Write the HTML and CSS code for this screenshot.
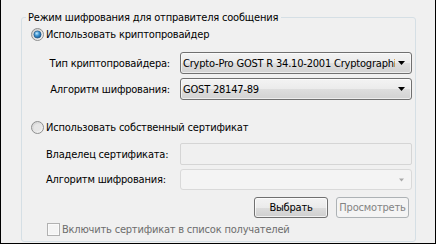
FILE: index.html
```html
<!DOCTYPE html>
<html lang="ru">
<head>
<meta charset="utf-8">
<title>Режим шифрования</title>
<link rel="stylesheet" href="styles.css">
</head>
<body>
<div class="frame">
  <fieldset class="group">
    <legend class="group-title">Режим шифрования для отправителя сообщения</legend>
    <div class="group-body">
      <div class="radio-row">
        <svg class="radio" width="13" height="13" viewBox="0 0 13 13">
          <defs>
            <linearGradient id="rb1" x1="0" y1="0" x2="1" y2="1"><stop offset="0" stop-color="#c9c9c9"/><stop offset="1" stop-color="#f7f7f7"/></linearGradient>
            <radialGradient id="dot" cx="0.4" cy="0.35" r="0.75"><stop offset="0" stop-color="#c4ebff"/><stop offset="0.45" stop-color="#3b93d2"/><stop offset="1" stop-color="#134b80"/></radialGradient>
          </defs>
          <circle cx="6.5" cy="6.5" r="6" fill="url(#rb1)" stroke="#8e8f8f"/>
          <circle cx="6.5" cy="6.5" r="3.6" fill="url(#dot)" stroke="#1a4c78" stroke-width="0.6"/>
        </svg>
        <span>Использовать криптопровайдер</span>
      </div>
      <div class="form form-right">
        <label class="lbl">Тип криптопровайдера:</label>
        <div class="combo"><span class="combo-text">Crypto-Pro GOST R 34.10-2001 Cryptographic Service Provider</span><svg class="arrow" width="7" height="4" viewBox="0 0 7 4"><path d="M0 0H7L3.5 4Z" fill="#000"/></svg></div>
        <label class="lbl">Алгоритм шифрования:</label>
        <div class="combo"><span class="combo-text">GOST 28147-89</span><svg class="arrow" width="7" height="4" viewBox="0 0 7 4"><path d="M0 0H7L3.5 4Z" fill="#000"/></svg></div>
      </div>
      <div class="radio-row radio-row-2">
        <svg class="radio" width="13" height="13" viewBox="0 0 13 13">
          <defs>
            <linearGradient id="rb2" x1="0" y1="0" x2="1" y2="1"><stop offset="0" stop-color="#cfcfcf"/><stop offset="1" stop-color="#f9f9f9"/></linearGradient>
          </defs>
          <circle cx="6.5" cy="6.5" r="6" fill="url(#rb2)" stroke="#8e8f8f"/>
          <circle cx="6.5" cy="6.5" r="3.6" fill="#e6e6e6"/>
        </svg>
        <span>Использовать собственный сертификат</span>
      </div>
      <div class="form form-left">
        <label class="lbl">Владелец сертификата:</label>
        <div class="textbox"></div>
        <label class="lbl">Алгоритм шифрования:</label>
        <div class="combo combo-disabled"><span class="combo-text"></span><svg class="arrow" width="7" height="4" viewBox="0 0 7 4"><path d="M1 0.5H6L3.5 3.5Z" fill="#a9a9a9"/></svg></div>
      </div>
      <div class="buttons">
        <button class="btn btn-select" type="button">Выбрать</button>
        <button class="btn btn-view" type="button" disabled>Просмотреть</button>
      </div>
      <div class="check-row">
        <span class="checkbox"></span>
        <span class="check-label">Включить сертификат в список получателей</span>
      </div>
    </div>
  </fieldset>
</div>
</body>
</html>
```
FILE: styles.css
```css
html, body {
  margin: 0;
  padding: 0;
  background: #ffffff;
}

body {
  font-family: "DejaVu Sans Condensed", "DejaVu Sans", sans-serif;
  font-stretch: condensed;
  font-size: 11px;
  line-height: 13px;
  letter-spacing: -0.2px;
  color: #000;
}

.frame {
  box-sizing: border-box;
  width: 436px;
  height: 244px;
  background: #f0f0f0;
  border-left: 1px solid #000;
  border-right: 1px solid #000;
  border-bottom: 1px solid #000;
  padding: 11px 0 0 20px;
}

.group {
  box-sizing: border-box;
  width: 395px;
  height: 231px;
  margin: 0;
  padding: 0;
  border: 1px solid #d5dfe5;
  border-radius: 3px;
  min-width: 0;
}

.group-title {
  margin-left: 4px;
  padding: 0 3px 0 2px;
  line-height: 13px;
}

.group-body {
  padding: 4px 0 0 9px;
}

.radio-row {
  display: flex;
  align-items: center;
  gap: 2px;
  height: 13px;
}

.radio {
  display: block;
  flex: none;
}

.radio-row-2 {
  margin-top: 21px;
}

.form {
  display: grid;
  grid-template-columns: 124px 232px;
  column-gap: 10px;
  row-gap: 4px;
  margin-left: 15px;
}

.form-right {
  margin-top: 11px;
  grid-auto-rows: 22px;
}

.form-right .lbl {
  text-align: right;
}

.form-left {
  margin-top: 9px;
  grid-template-rows: 22px 21px;
}

.form-left .lbl {
  text-align: left;
}

.lbl {
  align-self: center;
  white-space: nowrap;
}

.combo {
  box-sizing: border-box;
  display: flex;
  align-items: center;
  height: 100%;
  border: 1px solid #707070;
  border-radius: 3px;
  background: linear-gradient(#f3f3f3 0%, #ebebeb 50%, #dedede 50%, #d2d2d2 100%);
  box-shadow: inset 0 0 0 1px rgba(255, 255, 255, 0.6);
  padding-left: 2px;
  overflow: hidden;
}

.combo-text {
  flex: 1;
  min-width: 0;
  overflow: hidden;
  white-space: nowrap;
}

.arrow {
  flex: none;
  display: block;
  margin: 0 6px 0 3px;
}

.combo-disabled {
  border-color: #d9d9d9;
  background: #f4f4f4;
  box-shadow: none;
}

.textbox {
  box-sizing: border-box;
  height: 100%;
  border: 1px solid #d5d5d5;
  border-radius: 2px;
  background: #f0f0f0;
}

.buttons {
  display: flex;
  justify-content: flex-end;
  gap: 8px;
  margin-top: 7px;
  margin-right: 6px;
}

.btn {
  box-sizing: border-box;
  height: 21px;
  padding: 0;
  font: inherit;
  letter-spacing: inherit;
  line-height: 13px;
  color: #000;
  border: 1px solid #707070;
  border-radius: 3px;
  background: linear-gradient(#f3f3f3 0%, #ebebeb 50%, #dddddd 50%, #cfcfcf 100%);
  box-shadow: inset 0 0 0 1px rgba(255, 255, 255, 0.7);
}

.btn-select {
  width: 74px;
}

.btn-view {
  width: 73px;
}

.btn:disabled {
  color: #838383;
  border-color: #adb2b5;
  background: #f4f4f4;
  box-shadow: none;
}

.check-row {
  display: flex;
  align-items: center;
  gap: 2px;
  height: 13px;
  margin-top: 5px;
  margin-left: 16px;
}

.checkbox {
  box-sizing: border-box;
  width: 13px;
  height: 13px;
  flex: none;
  border: 1px solid #b1b1b1;
  background: #f4f4f4;
  box-shadow: inset 0 0 0 1px #fafafa;
}

.check-label {
  color: #6d6d6d;
}
```
